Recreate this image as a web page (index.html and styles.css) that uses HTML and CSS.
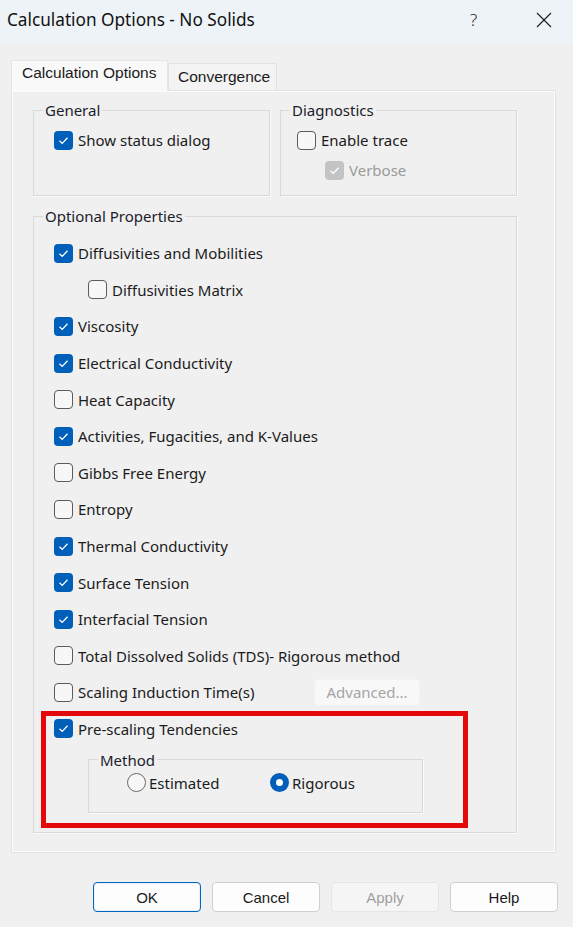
FILE: index.html
```html
<!DOCTYPE html>
<html lang="en">
<head>
<meta charset="utf-8">
<title>Calculation Options - No Solids</title>
<link rel="stylesheet" href="styles.css">
</head>
<body>
<div class="window">
  <div class="titlebar">
    <span class="title">Calculation Options - No Solids</span>
    <span class="help">?</span>
    <span class="close">
      <svg width="16" height="16" viewBox="0 0 16 16"><path d="M1 1 L15 15 M15 1 L1 15" stroke="#1a1a1a" stroke-width="1.1" fill="none"/></svg>
    </span>
  </div>
  <div class="client">
    <div class="tabs">
      <div class="tab active">Calculation Options</div>
      <div class="tab">Convergence</div>
    </div>
    <div class="panel">
      <div class="top-groups">
        <fieldset class="group general">
          <legend>General</legend>
          <div class="gbody">
            <div class="row"><span class="cb on"><svg viewBox="0 0 19 19"><path d="M5.5 9.8 L8.2 12.4 L13.5 6.8"/></svg></span>Show status dialog</div>
          </div>
        </fieldset>
        <fieldset class="group diag">
          <legend>Diagnostics</legend>
          <div class="gbody">
            <div class="row"><span class="cb"></span>Enable trace</div>
            <div class="row sub disabled"><span class="cb on dis"><svg viewBox="0 0 19 19"><path d="M5.5 9.8 L8.2 12.4 L13.5 6.8"/></svg></span>Verbose</div>
          </div>
        </fieldset>
      </div>
      <fieldset class="group optional">
        <legend>Optional Properties</legend>
        <div class="gbody">
          <div class="prow"><span class="cb on"><svg viewBox="0 0 19 19"><path d="M5.5 9.8 L8.2 12.4 L13.5 6.8"/></svg></span>Diffusivities and Mobilities</div>
          <div class="prow indent"><span class="cb"></span>Diffusivities Matrix</div>
          <div class="prow"><span class="cb on"><svg viewBox="0 0 19 19"><path d="M5.5 9.8 L8.2 12.4 L13.5 6.8"/></svg></span>Viscosity</div>
          <div class="prow"><span class="cb on"><svg viewBox="0 0 19 19"><path d="M5.5 9.8 L8.2 12.4 L13.5 6.8"/></svg></span>Electrical Conductivity</div>
          <div class="prow"><span class="cb"></span>Heat Capacity</div>
          <div class="prow"><span class="cb on"><svg viewBox="0 0 19 19"><path d="M5.5 9.8 L8.2 12.4 L13.5 6.8"/></svg></span>Activities, Fugacities, and K-Values</div>
          <div class="prow"><span class="cb"></span>Gibbs Free Energy</div>
          <div class="prow"><span class="cb"></span>Entropy</div>
          <div class="prow"><span class="cb on"><svg viewBox="0 0 19 19"><path d="M5.5 9.8 L8.2 12.4 L13.5 6.8"/></svg></span>Thermal Conductivity</div>
          <div class="prow"><span class="cb on"><svg viewBox="0 0 19 19"><path d="M5.5 9.8 L8.2 12.4 L13.5 6.8"/></svg></span>Surface Tension</div>
          <div class="prow"><span class="cb on"><svg viewBox="0 0 19 19"><path d="M5.5 9.8 L8.2 12.4 L13.5 6.8"/></svg></span>Interfacial Tension</div>
          <div class="prow"><span class="cb"></span>Total Dissolved Solids (TDS)- Rigorous method</div>
          <div class="prow"><span class="cb"></span><span class="scaling-label">Scaling Induction Time(s)</span><span class="btn-small">Advanced...</span></div>
          <div class="highlight">
            <div class="hrow"><span class="cb on"><svg viewBox="0 0 19 19"><path d="M5.5 9.8 L8.2 12.4 L13.5 6.8"/></svg></span>Pre-scaling Tendencies</div>
            <fieldset class="group method">
              <legend>Method</legend>
              <div class="gbody">
                <div class="radios">
                  <div class="radio-item first"><span class="rb"></span>Estimated</div>
                  <div class="radio-item"><span class="rb on"></span>Rigorous</div>
                </div>
              </div>
            </fieldset>
          </div>
        </div>
      </fieldset>
    </div>
    <div class="buttons">
      <div class="btn default">OK</div>
      <div class="btn">Cancel</div>
      <div class="btn disabled">Apply</div>
      <div class="btn">Help</div>
    </div>
  </div>
</div>
</body>
</html>
```
FILE: styles.css
```css
html, body {
  margin: 0;
  padding: 0;
}
body {
  background: #f0f0f0;
  font-family: "Noto Sans", "Open Sans", sans-serif;
  font-size: 15px;
  color: #1b1b1b;
  width: 573px;
  height: 927px;
  overflow: hidden;
}
.window {
  width: 573px;
  height: 927px;
}
.titlebar {
  height: 43px;
  background: #eef3f8;
  display: flex;
  align-items: center;
}
.title {
  padding-left: 7px;
  font-size: 17.2px;
  color: #111;
  flex: 1;
  margin-top: -4px;
}
.help {
  font-size: 17px;
  color: #222;
  width: 14px;
  margin-right: 52px;
  margin-top: -4px;
  font-weight: 300;
}
.close {
  width: 16px;
  height: 16px;
  margin-right: 21px;
  margin-top: -4px;
  display: flex;
}
.client {
  padding: 17px 0 0 11px;
}
.tabs {
  display: flex;
  align-items: flex-end;
  height: 30px;
}
.tab {
  font-family: "Liberation Sans", Arial, sans-serif;
  font-size: 15.5px;
  color: #1a1a1a;
  height: 27px;
  box-sizing: border-box;
  padding: 4px 4px 0 9px;
  background: #f3f3f3;
  border: 1px solid #e2e2e2;
  border-bottom: none;
  width: 109px;
}
.tab.active {
  width: 157px;
  padding: 3px 0 0 10px;
  background: #f9f9f9;
  border-color: #e6e6e6;
  position: relative;
  z-index: 1;
  margin-bottom: -1px;
  height: 31px;
}
.panel {
  width: 545px;
  height: 763px;
  box-sizing: border-box;
  border: 1px solid #e3e3e3;
  box-shadow: inset 1px 1px 0 #fcfcfc, inset -1px -1px 0 #fcfcfc;
  padding: 10px 0 0 21px;
}
fieldset.group {
  margin: 0;
  padding: 0;
  border: 1px solid #d9d9d9;
  box-shadow: 1px 1px 0 #fafafa;
  min-width: 0;
}
fieldset.group legend {
  margin-left: 9px;
  padding: 0 2px;
  line-height: 18px;
  color: #1c1c2c;
}
.top-groups {
  display: grid;
  grid-template-columns: 237px 237px;
  column-gap: 10px;
  height: 95px;
}
.row {
  display: flex;
  align-items: center;
  height: 22px;
}
.general .gbody {
  padding: 10px 0 0 20px;
}
.diag .gbody {
  padding: 10px 0 0 16px;
}
.diag .row + .row {
  margin-top: 8px;
}
.row.sub {
  padding-left: 28px;
}
.disabled {
  color: #9a9a9a;
}
.cb {
  width: 19px;
  height: 19px;
  box-sizing: border-box;
  border: 1px solid #5b5b5b;
  border-radius: 4px;
  background: #f7f7f7;
  margin-right: 5px;
  flex: none;
  display: flex;
}
.cb svg {
  width: 19px;
  height: 19px;
}
.cb svg path {
  fill: none;
  stroke: #ffffff;
  stroke-width: 1.3;
}
.cb.on {
  background: #005fb8;
  border: none;
}
.cb.on.dis {
  background: #c4c4c4;
}
fieldset.optional {
  margin-top: 11px;
  width: 484px;
  box-sizing: border-box;
}
.optional > .gbody {
  padding: 10px 0 4px 20px;
}
.prow {
  display: flex;
  align-items: center;
  height: 36.6px;
}
.prow.indent {
  padding-left: 34px;
}
.scaling-label {
  width: 236px;
}
.btn-small {
  width: 106px;
  height: 27px;
  box-sizing: border-box;
  background: #f8f8f8;
  border: 1px solid #f3f3f3;
  border-radius: 4px;
  color: #a5a5a5;
  display: flex;
  align-items: center;
  justify-content: center;
}
.highlight {
  margin: 0 0 0 -13px;
  width: 427px;
  box-sizing: border-box;
  border: 5px solid #e50a0a;
  padding: 1px 0 10px 8px;
}
.hrow {
  display: flex;
  align-items: center;
  height: 24px;
}
fieldset.method {
  margin: 10px 0 0 34px;
  width: 335px;
  box-sizing: border-box;
}
.method .gbody {
  padding: 3px 0 18px 38px;
}
.radios {
  display: flex;
  align-items: center;
  height: 22px;
}
.radio-item {
  display: flex;
  align-items: center;
}
.radio-item.first {
  width: 143px;
}
.rb {
  width: 19px;
  height: 19px;
  box-sizing: border-box;
  border: 1px solid #6a6a6a;
  border-radius: 50%;
  background: #f7f7f7;
  margin-right: 3px;
  flex: none;
}
.rb.on {
  border: 6px solid #005fb8;
  background: #ffffff;
}
.buttons {
  display: flex;
  gap: 11px;
  padding: 29px 0 0 82px;
}
.btn {
  width: 108px;
  height: 30px;
  box-sizing: border-box;
  background: #fdfdfd;
  border: 1px solid #d0d0d0;
  border-radius: 4px;
  font-family: "Liberation Sans", Arial, sans-serif;
  font-size: 15px;
  color: #1a1a1a;
  display: flex;
  align-items: center;
  justify-content: center;
}
.btn.default {
  border: 1px solid #0067c0;
  box-shadow: inset 0 0 0 1px #e8f0f8;
}
.btn.disabled {
  background: #f5f5f5;
  border-color: #e5e5e5;
  color: #a0a0a0;
}
```
